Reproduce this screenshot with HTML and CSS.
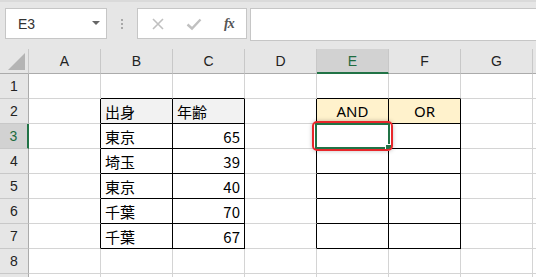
FILE: index.html
```html
<!DOCTYPE html>
<html>
<head>
  <title>Sheet</title>
  <link rel="stylesheet" href="styles.css">
</head>
<body>
  <div class="toolbar">
    <div class="namebox">
      <span class="name">E3</span>
      <span class="caret"></span>
    </div>
    <div class="grip"><i></i><i></i><i></i></div>
    <div class="fbuttons">
      <svg class="ficon" width="14" height="14" viewBox="0 0 14 14">
        <path d="M2 2 L12 12 M12 2 L2 12" stroke="#c0c0c0" stroke-width="1.6" fill="none"/>
      </svg>
      <svg class="ficon" width="16" height="14" viewBox="0 0 16 14">
        <path d="M1.5 7.5 L6 11.5 L14.5 2.5" stroke="#c0c0c0" stroke-width="2.4" fill="none"/>
      </svg>
      <span class="fx">fx</span>
    </div>
    <div class="finput"></div>
  </div>

  <div class="sheet">
    <!-- column headers -->
    <div class="corner"><span class="tri"></span></div>
    <div class="colhead">A</div>
    <div class="colhead">B</div>
    <div class="colhead">C</div>
    <div class="colhead">D</div>
    <div class="colhead active">E</div>
    <div class="colhead">F</div>
    <div class="colhead">G</div>
    <div class="colhead last"></div>

    <!-- row 1 -->
    <div class="rowhead">1</div>
    <div class="cell"></div>
    <div class="cell bb"></div>
    <div class="cell bb"></div>
    <div class="cell"></div>
    <div class="cell bb"></div>
    <div class="cell bb"></div>
    <div class="cell"></div>
    <div class="cell"></div>

    <!-- row 2 -->
    <div class="rowhead">2</div>
    <div class="cell br"></div>
    <div class="cell box head">出身</div>
    <div class="cell box head">年齢</div>
    <div class="cell br"></div>
    <div class="cell box cond">AND</div>
    <div class="cell box cond">OR</div>
    <div class="cell"></div>
    <div class="cell"></div>

    <!-- row 3 -->
    <div class="rowhead active">3</div>
    <div class="cell br"></div>
    <div class="cell box">東京</div>
    <div class="cell box num">65</div>
    <div class="cell br"></div>
    <div class="cell box"></div>
    <div class="cell box"></div>
    <div class="cell"></div>
    <div class="cell"></div>

    <!-- row 4 -->
    <div class="rowhead">4</div>
    <div class="cell br"></div>
    <div class="cell box">埼玉</div>
    <div class="cell box num">39</div>
    <div class="cell br"></div>
    <div class="cell box"></div>
    <div class="cell box"></div>
    <div class="cell"></div>
    <div class="cell"></div>

    <!-- row 5 -->
    <div class="rowhead">5</div>
    <div class="cell br"></div>
    <div class="cell box">東京</div>
    <div class="cell box num">40</div>
    <div class="cell br"></div>
    <div class="cell box"></div>
    <div class="cell box"></div>
    <div class="cell"></div>
    <div class="cell"></div>

    <!-- row 6 -->
    <div class="rowhead">6</div>
    <div class="cell br"></div>
    <div class="cell box">千葉</div>
    <div class="cell box num">70</div>
    <div class="cell br"></div>
    <div class="cell box"></div>
    <div class="cell box"></div>
    <div class="cell"></div>
    <div class="cell"></div>

    <!-- row 7 -->
    <div class="rowhead">7</div>
    <div class="cell br"></div>
    <div class="cell box">千葉</div>
    <div class="cell box num">67</div>
    <div class="cell br"></div>
    <div class="cell box"></div>
    <div class="cell box"></div>
    <div class="cell"></div>
    <div class="cell"></div>

    <!-- row 8 -->
    <div class="rowhead">8</div>
    <div class="cell"></div>
    <div class="cell"></div>
    <div class="cell"></div>
    <div class="cell"></div>
    <div class="cell"></div>
    <div class="cell"></div>
    <div class="cell"></div>
    <div class="cell"></div>

    <!-- row 9, only its top edge shows -->
    <div class="rowhead"></div>
    <div class="cell"></div>
    <div class="cell"></div>
    <div class="cell"></div>
    <div class="cell"></div>
    <div class="cell"></div>
    <div class="cell"></div>
    <div class="cell"></div>
    <div class="cell"></div>

    <!-- selection and highlight over E3 -->
    <div class="selection"><span class="handle"></span></div>
    <div class="highlight"></div>
  </div>
</body>
</html>
```

FILE: styles.css
```css
html, body {
  margin: 0;
  padding: 0;
}

body {
  width: 536px;
  height: 277px;
  overflow: hidden;
  background-color: #e6e6e6;
  font-family: "Noto Sans CJK JP", sans-serif;
}

.toolbar {
  display: flex;
  align-items: flex-start;
  height: 49px;
  padding-top: 8px;
  box-sizing: border-box;
  border-top: 2px solid #dadada;
}

.namebox {
  display: flex;
  align-items: center;
  justify-content: space-between;
  width: 102px;
  height: 31px;
  margin-top: -2px;
  margin-left: 5px;
  padding: 0 6px 0 12px;
  box-sizing: border-box;
  background-color: #fff;
  border: 1px solid #c6c6c6;
}

.name {
  font-family: "Liberation Sans", sans-serif;
  font-size: 14px;
  color: #333;
}

.caret {
  width: 0;
  height: 0;
  border-left: 4px solid transparent;
  border-right: 4px solid transparent;
  border-top: 4px solid #666;
  margin-top: -2px;
}

.grip {
  display: flex;
  flex-direction: column;
  align-items: center;
  gap: 2px;
  width: 30px;
  margin-top: 9px;
}

.grip i {
  width: 2px;
  height: 2px;
  background-color: #a8a8a8;
}

.fbuttons {
  display: flex;
  align-items: center;
  width: 110px;
  height: 31px;
  margin-top: -2px;
  padding-left: 13px;
  box-sizing: border-box;
  background-color: #fff;
  border: 1px solid #c6c6c6;
}

.ficon {
  margin-right: 21px;
}

.fx {
  font-family: "Liberation Serif", serif;
  font-style: italic;
  font-weight: bold;
  font-size: 14px;
  color: #555;
  margin-left: 1px;
  letter-spacing: -1px;
}

.finput {
  flex: 1;
  height: 31px;
  margin-top: -2px;
  margin-left: 3px;
  background-color: #fff;
  border: 1px solid #c6c6c6;
  border-right: none;
}

.sheet {
  position: relative;
  display: grid;
  grid-template-columns: 29px repeat(7, 72px) 1fr;
  grid-auto-rows: 25px;
  background-color: #fff;
}

.corner,
.colhead,
.rowhead,
.cell {
  box-sizing: border-box;
}

.corner {
  position: relative;
  background-color: #e6e6e6;
  border-right: 1px solid #c8c8c8;
  border-bottom: 1px solid #ababab;
}

.tri {
  position: absolute;
  right: 3px;
  bottom: 3px;
  width: 0;
  height: 0;
  border-left: 17px solid transparent;
  border-bottom: 17px solid #b4b4b4;
}

.colhead {
  display: flex;
  align-items: center;
  justify-content: center;
  background-color: #e6e6e6;
  border-right: 1px solid #c8c8c8;
  border-bottom: 1px solid #ababab;
  font-family: "Liberation Sans", sans-serif;
  font-size: 14px;
  color: #222;
}

.colhead.last {
  border-right: none;
}

.colhead.active {
  background-color: #d2d2d2;
  border-bottom: 2px solid #217346;
  color: #1e6b3f;
}

.rowhead {
  display: flex;
  align-items: center;
  justify-content: center;
  background-color: #e6e6e6;
  border-right: 1px solid #ababab;
  border-bottom: 1px solid #c8c8c8;
  font-family: "Liberation Sans", sans-serif;
  font-size: 14px;
  color: #222;
}

.rowhead.active {
  background-color: #d2d2d2;
  border-right: 2px solid #217346;
  color: #1e6b3f;
}

.cell {
  display: flex;
  align-items: center;
  padding: 0 4px;
  border-right: 1px solid #d4d4d4;
  border-bottom: 1px solid #d4d4d4;
  font-size: 15px;
  color: #000;
  white-space: nowrap;
}

.cell.bb {
  border-bottom-color: #000;
}

.cell.br {
  border-right-color: #000;
}

.cell.box {
  border-right-color: #000;
  border-bottom-color: #000;
}

.cell.head {
  background-color: #f2f2f2;
}

.cell.cond {
  justify-content: center;
  background-color: #fff2cc;
  font-family: "Noto Sans", sans-serif;
}

.cell.num {
  justify-content: flex-end;
}

.selection {
  position: absolute;
  left: 315px;
  top: 74px;
  width: 75px;
  height: 26px;
  box-sizing: border-box;
  border: 2px solid #217346;
}

.handle {
  position: absolute;
  right: -4px;
  bottom: -4px;
  width: 5px;
  height: 5px;
  background-color: #217346;
  border: 1px solid #fff;
}

.highlight {
  position: absolute;
  left: 312px;
  top: 72px;
  width: 81px;
  height: 30px;
  box-sizing: border-box;
  border: 2px solid #e8262a;
  border-radius: 5px;
  box-shadow: 0 0 4px rgba(0, 0, 0, 0.25);
}
```
